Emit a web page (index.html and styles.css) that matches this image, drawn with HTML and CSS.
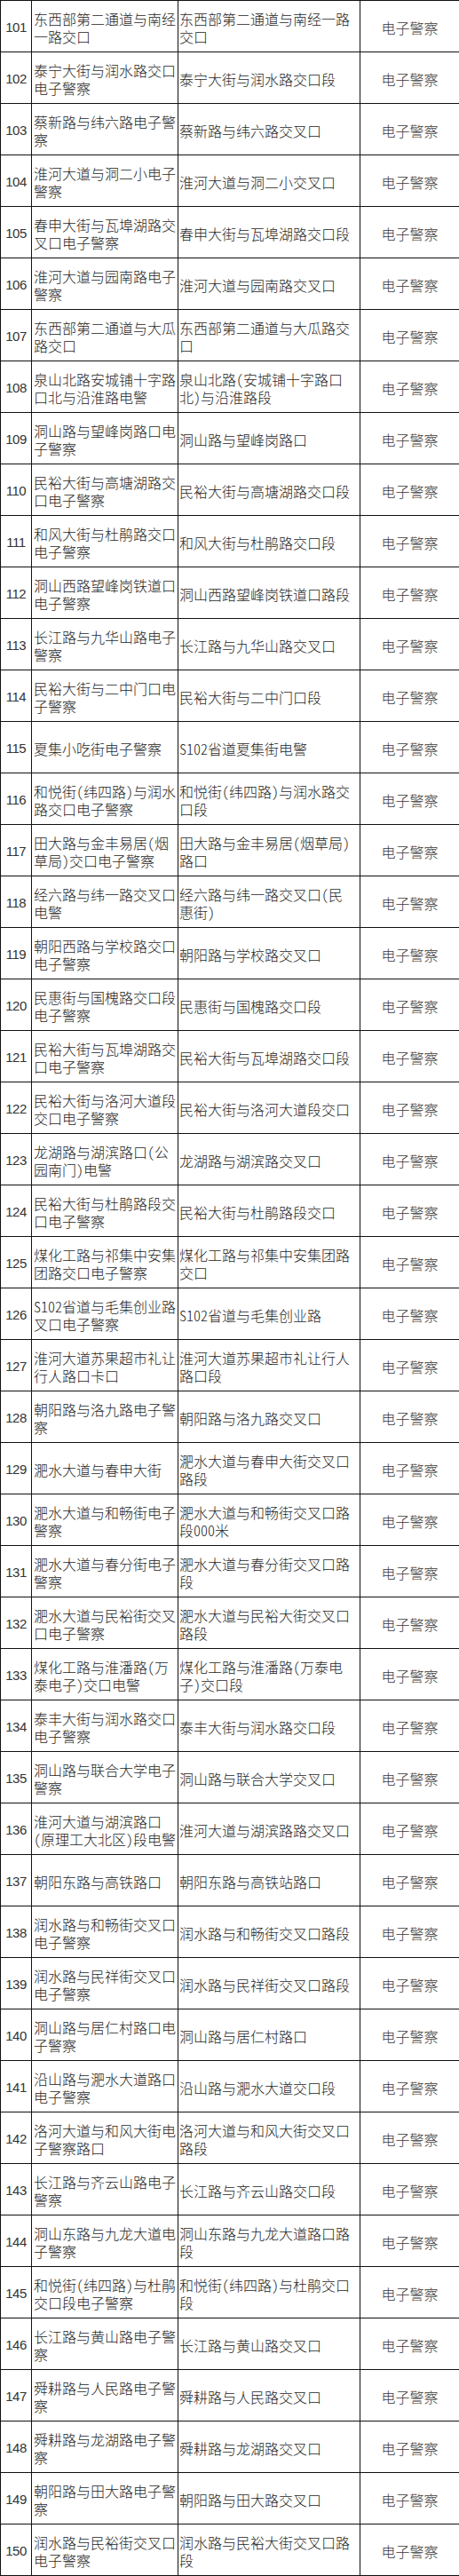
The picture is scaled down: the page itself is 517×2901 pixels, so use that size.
FILE: index.html
```html
<!DOCTYPE html>
<html lang="zh-CN">
<head>
<meta charset="utf-8">
<title>电子警察点位表</title>
<link rel="stylesheet" href="styles.css">
</head>
<body>
<table class="list">
<colgroup><col class="c-no"><col class="c-name"><col class="c-loc"><col class="c-type"></colgroup>
<tbody>
<tr><td class="no">101</td><td class="name">东西部第二通道与南经<br>一路交口</td><td class="loc">东西部第二通道与南经一路<br>交口</td><td class="type">电子警察</td></tr>
<tr><td class="no">102</td><td class="name">泰宁大街与润水路交口<br>电子警察</td><td class="loc">泰宁大街与润水路交口段</td><td class="type">电子警察</td></tr>
<tr><td class="no">103</td><td class="name">蔡新路与纬六路电子警<br>察</td><td class="loc">蔡新路与纬六路交叉口</td><td class="type">电子警察</td></tr>
<tr><td class="no">104</td><td class="name">淮河大道与洞二小电子<br>警察</td><td class="loc">淮河大道与洞二小交叉口</td><td class="type">电子警察</td></tr>
<tr><td class="no">105</td><td class="name">春申大街与瓦埠湖路交<br>叉口电子警察</td><td class="loc">春申大街与瓦埠湖路交口段</td><td class="type">电子警察</td></tr>
<tr><td class="no">106</td><td class="name">淮河大道与园南路电子<br>警察</td><td class="loc">淮河大道与园南路交叉口</td><td class="type">电子警察</td></tr>
<tr><td class="no">107</td><td class="name">东西部第二通道与大瓜<br>路交口</td><td class="loc">东西部第二通道与大瓜路交<br>口</td><td class="type">电子警察</td></tr>
<tr><td class="no">108</td><td class="name">泉山北路安城铺十字路<br>口北与沿淮路电警</td><td class="loc">泉山北路(安城铺十字路口<br>北)与沿淮路段</td><td class="type">电子警察</td></tr>
<tr><td class="no">109</td><td class="name">洞山路与望峰岗路口电<br>子警察</td><td class="loc">洞山路与望峰岗路口</td><td class="type">电子警察</td></tr>
<tr><td class="no">110</td><td class="name">民裕大街与高塘湖路交<br>口电子警察</td><td class="loc">民裕大街与高塘湖路交口段</td><td class="type">电子警察</td></tr>
<tr><td class="no">111</td><td class="name">和风大街与杜鹃路交口<br>电子警察</td><td class="loc">和风大街与杜鹃路交口段</td><td class="type">电子警察</td></tr>
<tr><td class="no">112</td><td class="name">洞山西路望峰岗铁道口<br>电子警察</td><td class="loc">洞山西路望峰岗铁道口路段</td><td class="type">电子警察</td></tr>
<tr><td class="no">113</td><td class="name">长江路与九华山路电子<br>警察</td><td class="loc">长江路与九华山路交叉口</td><td class="type">电子警察</td></tr>
<tr><td class="no">114</td><td class="name">民裕大街与二中门口电<br>子警察</td><td class="loc">民裕大街与二中门口段</td><td class="type">电子警察</td></tr>
<tr><td class="no">115</td><td class="name">夏集小吃街电子警察</td><td class="loc">S102省道夏集街电警</td><td class="type">电子警察</td></tr>
<tr><td class="no">116</td><td class="name">和悦街(纬四路)与润水<br>路交口电子警察</td><td class="loc">和悦街(纬四路)与润水路交<br>口段</td><td class="type">电子警察</td></tr>
<tr><td class="no">117</td><td class="name">田大路与金丰易居(烟<br>草局)交口电子警察</td><td class="loc">田大路与金丰易居(烟草局)<br>路口</td><td class="type">电子警察</td></tr>
<tr><td class="no">118</td><td class="name">经六路与纬一路交叉口<br>电警</td><td class="loc">经六路与纬一路交叉口（民<br>惠街）</td><td class="type">电子警察</td></tr>
<tr><td class="no">119</td><td class="name">朝阳西路与学校路交口<br>电子警察</td><td class="loc">朝阳路与学校路交叉口</td><td class="type">电子警察</td></tr>
<tr><td class="no">120</td><td class="name">民惠街与国槐路交口段<br>电子警察</td><td class="loc">民惠街与国槐路交口段</td><td class="type">电子警察</td></tr>
<tr><td class="no">121</td><td class="name">民裕大街与瓦埠湖路交<br>口电子警察</td><td class="loc">民裕大街与瓦埠湖路交口段</td><td class="type">电子警察</td></tr>
<tr><td class="no">122</td><td class="name">民裕大街与洛河大道段<br>交口电子警察</td><td class="loc">民裕大街与洛河大道段交口</td><td class="type">电子警察</td></tr>
<tr><td class="no">123</td><td class="name">龙湖路与湖滨路口(公<br>园南门)电警</td><td class="loc">龙湖路与湖滨路交叉口</td><td class="type">电子警察</td></tr>
<tr><td class="no">124</td><td class="name">民裕大街与杜鹃路段交<br>口电子警察</td><td class="loc">民裕大街与杜鹃路段交口</td><td class="type">电子警察</td></tr>
<tr><td class="no">125</td><td class="name">煤化工路与祁集中安集<br>团路交口电子警察</td><td class="loc">煤化工路与祁集中安集团路<br>交口</td><td class="type">电子警察</td></tr>
<tr><td class="no">126</td><td class="name">S102省道与毛集创业路<br>叉口电子警察</td><td class="loc">S102省道与毛集创业路</td><td class="type">电子警察</td></tr>
<tr><td class="no">127</td><td class="name">淮河大道苏果超市礼让<br>行人路口卡口</td><td class="loc">淮河大道苏果超市礼让行人<br>路口段</td><td class="type">电子警察</td></tr>
<tr><td class="no">128</td><td class="name">朝阳路与洛九路电子警<br>察</td><td class="loc">朝阳路与洛九路交叉口</td><td class="type">电子警察</td></tr>
<tr><td class="no">129</td><td class="name">淝水大道与春申大街</td><td class="loc">淝水大道与春申大街交叉口<br>路段</td><td class="type">电子警察</td></tr>
<tr><td class="no">130</td><td class="name">淝水大道与和畅街电子<br>警察</td><td class="loc">淝水大道与和畅街交叉口路<br>段000米</td><td class="type">电子警察</td></tr>
<tr><td class="no">131</td><td class="name">淝水大道与春分街电子<br>警察</td><td class="loc">淝水大道与春分街交叉口路<br>段</td><td class="type">电子警察</td></tr>
<tr><td class="no">132</td><td class="name">淝水大道与民裕街交叉<br>口电子警察</td><td class="loc">淝水大道与民裕大街交叉口<br>路段</td><td class="type">电子警察</td></tr>
<tr><td class="no">133</td><td class="name">煤化工路与淮潘路(万<br>泰电子)交口电警</td><td class="loc">煤化工路与淮潘路(万泰电<br>子)交口段</td><td class="type">电子警察</td></tr>
<tr><td class="no">134</td><td class="name">泰丰大街与润水路交口<br>电子警察</td><td class="loc">泰丰大街与润水路交口段</td><td class="type">电子警察</td></tr>
<tr><td class="no">135</td><td class="name">洞山路与联合大学电子<br>警察</td><td class="loc">洞山路与联合大学交叉口</td><td class="type">电子警察</td></tr>
<tr><td class="no">136</td><td class="name">淮河大道与湖滨路口<br>(原理工大北区)段电警</td><td class="loc">淮河大道与湖滨路路交叉口</td><td class="type">电子警察</td></tr>
<tr><td class="no">137</td><td class="name">朝阳东路与高铁路口</td><td class="loc">朝阳东路与高铁站路口</td><td class="type">电子警察</td></tr>
<tr><td class="no">138</td><td class="name">润水路与和畅街交叉口<br>电子警察</td><td class="loc">润水路与和畅街交叉口路段</td><td class="type">电子警察</td></tr>
<tr><td class="no">139</td><td class="name">润水路与民祥街交叉口<br>电子警察</td><td class="loc">润水路与民祥街交叉口路段</td><td class="type">电子警察</td></tr>
<tr><td class="no">140</td><td class="name">洞山路与居仁村路口电<br>子警察</td><td class="loc">洞山路与居仁村路口</td><td class="type">电子警察</td></tr>
<tr><td class="no">141</td><td class="name">沿山路与淝水大道路口<br>电子警察</td><td class="loc">沿山路与淝水大道交口段</td><td class="type">电子警察</td></tr>
<tr><td class="no">142</td><td class="name">洛河大道与和风大街电<br>子警察路口</td><td class="loc">洛河大道与和风大街交叉口<br>路段</td><td class="type">电子警察</td></tr>
<tr><td class="no">143</td><td class="name">长江路与齐云山路电子<br>警察</td><td class="loc">长江路与齐云山路交口段</td><td class="type">电子警察</td></tr>
<tr><td class="no">144</td><td class="name">洞山东路与九龙大道电<br>子警察</td><td class="loc">洞山东路与九龙大道路口路<br>段</td><td class="type">电子警察</td></tr>
<tr><td class="no">145</td><td class="name">和悦街(纬四路)与杜鹃<br>交口段电子警察</td><td class="loc">和悦街(纬四路)与杜鹃交口<br>段</td><td class="type">电子警察</td></tr>
<tr><td class="no">146</td><td class="name">长江路与黄山路电子警<br>察</td><td class="loc">长江路与黄山路交叉口</td><td class="type">电子警察</td></tr>
<tr><td class="no">147</td><td class="name">舜耕路与人民路电子警<br>察</td><td class="loc">舜耕路与人民路交叉口</td><td class="type">电子警察</td></tr>
<tr><td class="no">148</td><td class="name">舜耕路与龙湖路电子警<br>察</td><td class="loc">舜耕路与龙湖路交叉口</td><td class="type">电子警察</td></tr>
<tr><td class="no">149</td><td class="name">朝阳路与田大路电子警<br>察</td><td class="loc">朝阳路与田大路交叉口</td><td class="type">电子警察</td></tr>
<tr><td class="no">150</td><td class="name">润水路与民裕街交叉口<br>电子警察</td><td class="loc">润水路与民裕大街交叉口路<br>段</td><td class="type">电子警察</td></tr>
</tbody>
</table>
</body>
</html>
```

FILE: styles.css
```css
html, body {
  margin: 0;
  padding: 0;
  background: #fff;
}

.list {
  border-collapse: collapse;
  table-layout: fixed;
  width: 517px;
  font-family: "Noto Sans CJK SC", "Noto Sans CJK TC", sans-serif;
  font-size: 16px;
  font-weight: 300;
  line-height: 20px;
  color: #262626;
}

.c-no { width: 35px; }
.c-name { width: 165px; }
.c-loc { width: 205px; }
.c-type { width: 112px; }

.list td {
  border: 1px solid #111;
  height: 54px;
  padding: 3px 1px 0 2px;
  vertical-align: middle;
  white-space: nowrap;
  overflow: hidden;
  font-feature-settings: "hwid" 1;
}

.list td.no {
  padding: 3px 0 0 0;
  text-align: center;
  font-family: "Liberation Sans", "DejaVu Sans", sans-serif;
  font-weight: 400;
  font-size: 15px;
  letter-spacing: -0.5px;
  color: #333;
}

.list td.loc {
  padding-left: 1px;
}

.list td.type {
  padding-left: 0;
  padding-right: 0;
  text-align: center;
  color: #3a3a3a;
}
```
